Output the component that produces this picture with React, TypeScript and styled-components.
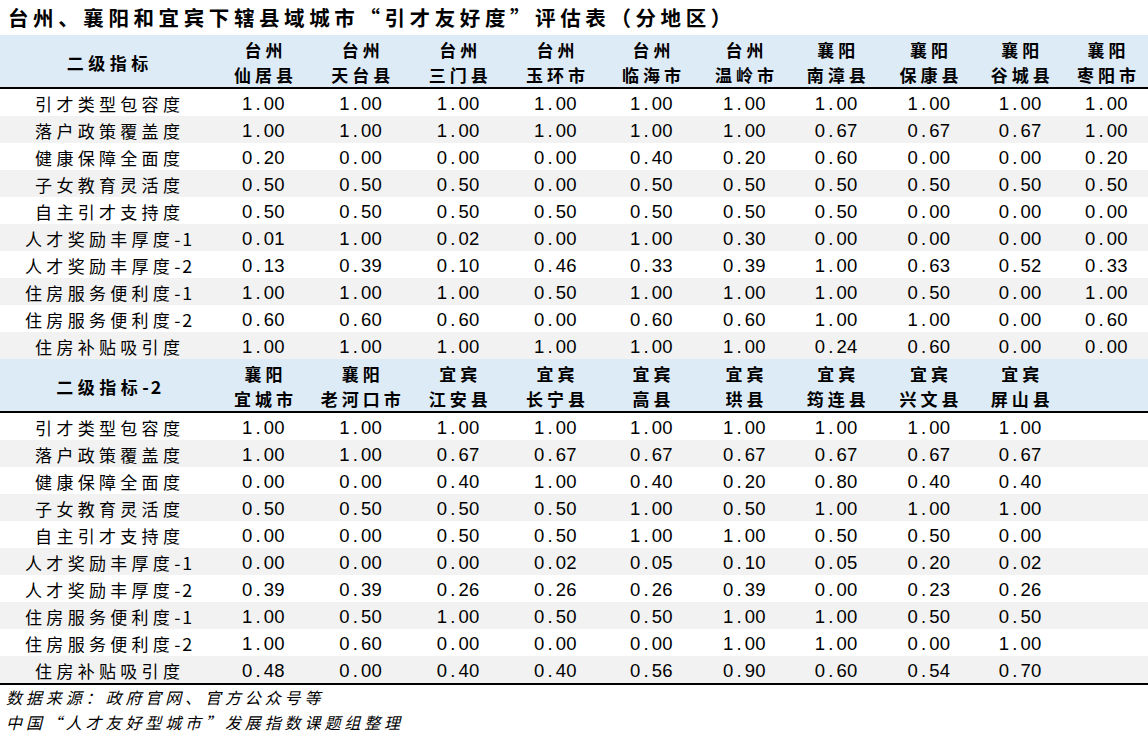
import React from "react";
import styled, { createGlobalStyle } from "styled-components";

const GlobalStyle = createGlobalStyle`
  html, body { margin: 0; padding: 0; background: #ffffff; }
  body { font-family: "Noto Sans CJK SC", "Noto Sans", sans-serif; color: #000; }
`;

const COLS = "215px 97px 97.5px 97.5px 97px 95px 91px 92.5px 93px 89.5px 1fr";

const Page = styled.div`
  width: 1148px;
  display: flex;
  flex-direction: column;
`;

const Title = styled.div`
  height: 35px;
  line-height: 35px;
  padding-left: 8px;
  font-size: 20.5px;
  font-weight: 700;
  letter-spacing: 4.6px;
  white-space: nowrap;
`;

const HeaderRow = styled.div`
  display: grid;
  grid-template-columns: ${COLS};
  height: 52px;
  background: #ddebf7;
  border-bottom: 2px solid #000;
`;

const HeadLabel = styled.div`
  display: flex;
  align-items: center;
  justify-content: center;
  font-size: 17px;
  font-weight: 700;
  letter-spacing: 4.5px;
  padding-left: 4.5px;
  padding-top: 2px;
  white-space: nowrap;
`;

const HeadCell = styled.div`
  display: flex;
  flex-direction: column;
  align-items: center;
  padding-top: 2px;
  font-size: 17px;
  font-weight: 700;
  line-height: 25px;
  letter-spacing: 4px;
  white-space: nowrap;
`;

const HeadLine = styled.span`
  padding-left: 4px;
`;

const Suffix = styled.span`
  letter-spacing: 2px;
  font-size: 1.05em;
`;

const DataRow = styled.div<{ $shade: boolean }>`
  display: grid;
  grid-template-columns: ${COLS};
  height: 27px;
  align-items: center;
  background: ${(p) => (p.$shade ? "#f2f2f2" : "#ffffff")};
`;

const RowLabel = styled.div`
  text-align: center;
  font-size: 17px;
  letter-spacing: 4.3px;
  padding-left: 4.3px;
  white-space: nowrap;
  line-height: 27px;
`;

const Num = styled.div`
  text-align: center;
  font-family: "Liberation Sans", Arial, sans-serif;
  font-size: 18.5px;
  line-height: 27px;
  padding-top: 1px;
  white-space: nowrap;
`;

const Dot = styled.span`
  display: inline-block;
  width: 11px;
  text-align: center;
`;

const Digits = styled.span`
  letter-spacing: 0.4px;
`;

const BottomRule = styled.div`
  height: 2px;
  background: #000;
`;

const Footer = styled.div`
  display: flex;
  flex-direction: column;
  padding-left: 6px;
  font-size: 16px;
  font-style: italic;
  line-height: 25px;
  letter-spacing: 3.9px;
  white-space: nowrap;
`;

type Region = [string, string];

const head1: Region[] = [
  ["台州", "仙居县"],
  ["台州", "天台县"],
  ["台州", "三门县"],
  ["台州", "玉环市"],
  ["台州", "临海市"],
  ["台州", "温岭市"],
  ["襄阳", "南漳县"],
  ["襄阳", "保康县"],
  ["襄阳", "谷城县"],
  ["襄阳", "枣阳市"],
];

const head2: Region[] = [
  ["襄阳", "宜城市"],
  ["襄阳", "老河口市"],
  ["宜宾", "江安县"],
  ["宜宾", "长宁县"],
  ["宜宾", "高县"],
  ["宜宾", "珙县"],
  ["宜宾", "筠连县"],
  ["宜宾", "兴文县"],
  ["宜宾", "屏山县"],
];

const labels = [
  "引才类型包容度",
  "落户政策覆盖度",
  "健康保障全面度",
  "子女教育灵活度",
  "自主引才支持度",
  "人才奖励丰厚度-1",
  "人才奖励丰厚度-2",
  "住房服务便利度-1",
  "住房服务便利度-2",
  "住房补贴吸引度",
];

const data1: string[][] = [
  ["1.00", "1.00", "1.00", "1.00", "1.00", "1.00", "1.00", "1.00", "1.00", "1.00"],
  ["1.00", "1.00", "1.00", "1.00", "1.00", "1.00", "0.67", "0.67", "0.67", "1.00"],
  ["0.20", "0.00", "0.00", "0.00", "0.40", "0.20", "0.60", "0.00", "0.00", "0.20"],
  ["0.50", "0.50", "0.50", "0.00", "0.50", "0.50", "0.50", "0.50", "0.50", "0.50"],
  ["0.50", "0.50", "0.50", "0.50", "0.50", "0.50", "0.50", "0.00", "0.00", "0.00"],
  ["0.01", "1.00", "0.02", "0.00", "1.00", "0.30", "0.00", "0.00", "0.00", "0.00"],
  ["0.13", "0.39", "0.10", "0.46", "0.33", "0.39", "1.00", "0.63", "0.52", "0.33"],
  ["1.00", "1.00", "1.00", "0.50", "1.00", "1.00", "1.00", "0.50", "0.00", "1.00"],
  ["0.60", "0.60", "0.60", "0.00", "0.60", "0.60", "1.00", "1.00", "0.00", "0.60"],
  ["1.00", "1.00", "1.00", "1.00", "1.00", "1.00", "0.24", "0.60", "0.00", "0.00"],
];

const data2: string[][] = [
  ["1.00", "1.00", "1.00", "1.00", "1.00", "1.00", "1.00", "1.00", "1.00"],
  ["1.00", "1.00", "0.67", "0.67", "0.67", "0.67", "0.67", "0.67", "0.67"],
  ["0.00", "0.00", "0.40", "1.00", "0.40", "0.20", "0.80", "0.40", "0.40"],
  ["0.50", "0.50", "0.50", "0.50", "1.00", "0.50", "1.00", "1.00", "1.00"],
  ["0.00", "0.00", "0.50", "0.50", "1.00", "1.00", "0.50", "0.50", "0.00"],
  ["0.00", "0.00", "0.00", "0.02", "0.05", "0.10", "0.05", "0.20", "0.02"],
  ["0.39", "0.39", "0.26", "0.26", "0.26", "0.39", "0.00", "0.23", "0.26"],
  ["1.00", "0.50", "1.00", "0.50", "0.50", "1.00", "1.00", "0.50", "0.50"],
  ["1.00", "0.60", "0.00", "0.00", "0.00", "1.00", "1.00", "0.00", "1.00"],
  ["0.48", "0.00", "0.40", "0.40", "0.56", "0.90", "0.60", "0.54", "0.70"],
];

const LabelText: React.FC<{ text: string }> = ({ text }) => {
  const idx = text.indexOf("-");
  if (idx < 0) return <>{text}</>;
  return (
    <>
      {text.slice(0, idx)}
      <Suffix>{text.slice(idx)}</Suffix>
    </>
  );
};

const Value: React.FC<{ v: string }> = ({ v }) => {
  const [a, b] = v.split(".");
  return (
    <Num>
      <Digits>{a}</Digits>
      <Dot>.</Dot>
      <Digits>{b}</Digits>
    </Num>
  );
};

const Section: React.FC<{ title: string; heads: Region[]; rows: string[][] }> = ({
  title,
  heads,
  rows,
}) => (
  <>
    <HeaderRow>
      <HeadLabel>
        <LabelText text={title} />
      </HeadLabel>
      {heads.map(([city, county], i) => (
        <HeadCell key={i}>
          <HeadLine>{city}</HeadLine>
          <HeadLine>{county}</HeadLine>
        </HeadCell>
      ))}
    </HeaderRow>
    {rows.map((r, i) => (
      <DataRow key={i} $shade={i % 2 === 1}>
        <RowLabel>
          <LabelText text={labels[i]} />
        </RowLabel>
        {r.map((v, j) => (
          <Value key={j} v={v} />
        ))}
      </DataRow>
    ))}
  </>
);

export default function App() {
  return (
    <Page>
      <GlobalStyle />
      <Title>台州、襄阳和宜宾下辖县域城市“引才友好度”评估表（分地区）</Title>
      <Section title="二级指标" heads={head1} rows={data1} />
      <Section title="二级指标-2" heads={head2} rows={data2} />
      <BottomRule />
      <Footer>
        <span>数据来源：政府官网、官方公众号等</span>
        <span>中国“人才友好型城市”发展指数课题组整理</span>
      </Footer>
    </Page>
  );
}
